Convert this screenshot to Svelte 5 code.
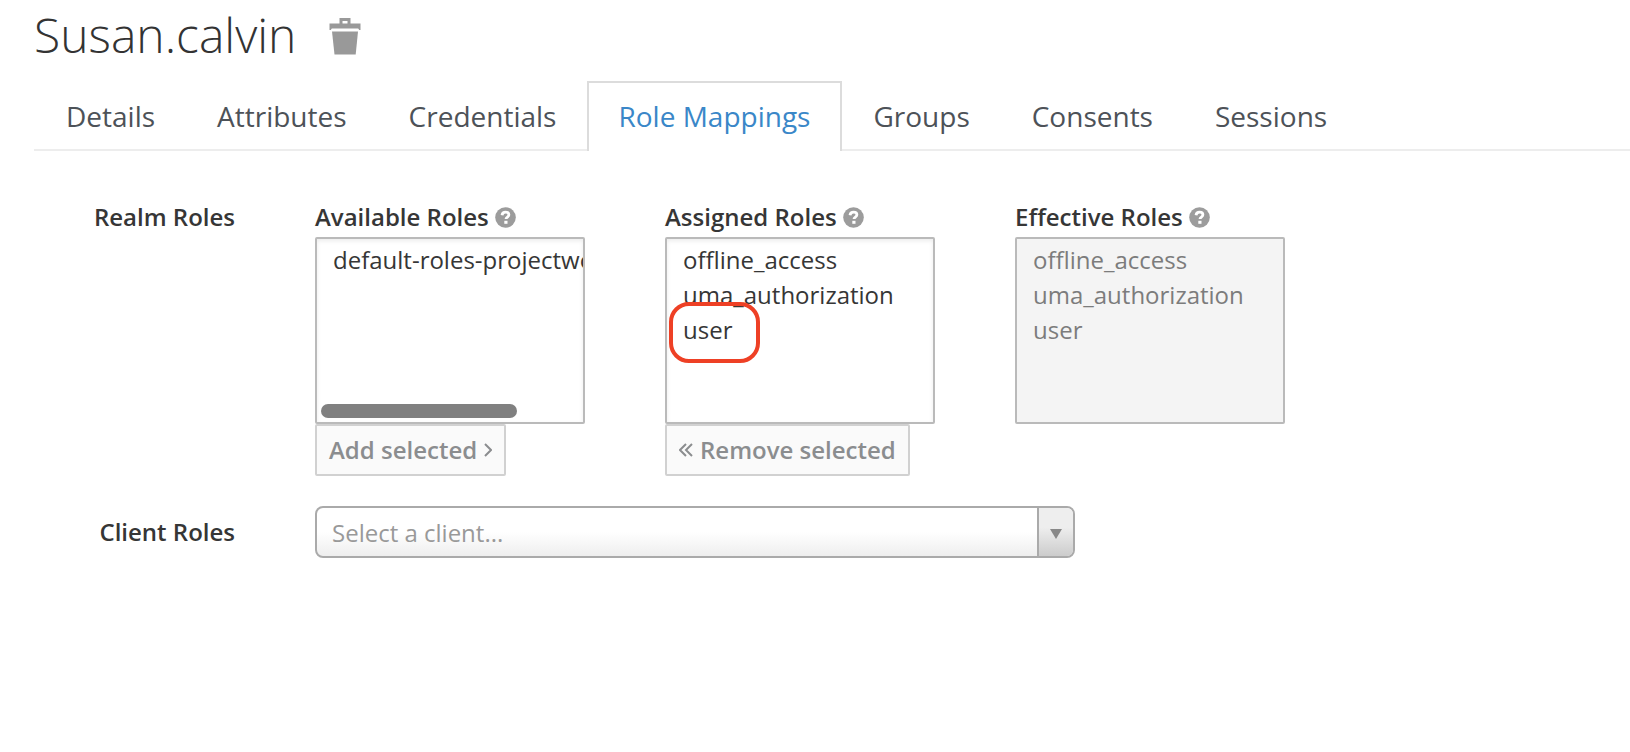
<script>
  const tabs = ['Details', 'Attributes', 'Credentials', 'Role Mappings', 'Groups', 'Consents', 'Sessions'];
  const active = 'Role Mappings';
  const available = ['default-roles-projectworlds'];
  const assigned = ['offline_access', 'uma_authorization', 'user'];
</script>

{#snippet help()}
  <svg class="help" viewBox="0 0 21 21" aria-hidden="true">
    <circle cx="10.500" cy="10.500" r="10.300" fill="#9c9c9c" />
    <path d="M7 8.200C7.300 6.200 8.600 5.200 10.600 5.200c2 0 3.300 1 3.300 2.600 0 2.300-2.900 2.200-2.900 4.200" fill="none" stroke="#fff" stroke-width="2.800" />
    <path d="M9.300 13.800h3.200v3H9.300z" fill="#fff" />
  </svg>
{/snippet}

<main>
  <header>
    <h1>Susan.calvin</h1>
    <button class="trash" aria-label="Delete user">
      <svg viewBox="0 0 32 38" aria-hidden="true">
        <path fill="#999" fill-rule="evenodd" d="M10.500 0h11v5.500h10v6.500h-1.300l-1-1.500H2.800l-1 1.500H.5V5.500h10zM13.500 3v2.500h5V3z" />
        <path fill="#999" d="M3 13.500h26l-2.300 23H5.500z" />
      </svg>
    </button>
  </header>

  <nav>
    {#each tabs as tab}
      <a href="#{tab}" class:active={tab === active}>{tab}</a>
    {/each}
  </nav>

  <form>
    <div class="row">
      <span class="name">Realm Roles</span>
      <div class="columns">
        <div class="col">
          <label for="available">Available Roles {@render help()}</label>
          <div class="box">
            <select id="available" multiple>
              {#each available as role}<option>{role}</option>{/each}
            </select>
            <span class="thumb"></span>
          </div>
          <button type="button" disabled>
            Add selected
            <svg class="single" viewBox="0 0 8 14" aria-hidden="true"><path d="M1 1l6 6-6 6" /></svg>
          </button>
        </div>
        <div class="col">
          <label for="assigned">Assigned Roles {@render help()}</label>
          <div class="box">
            <select id="assigned" multiple>
              {#each assigned as role}<option>{role}</option>{/each}
            </select>
            <span class="ring"></span>
          </div>
          <button type="button" disabled>
            <svg class="double" viewBox="0 0 14 14" aria-hidden="true"><path d="M7 1L1 7l6 6M13 1L7 7l6 6" /></svg>
            Remove selected
          </button>
        </div>
        <div class="col">
          <label for="effective">Effective Roles {@render help()}</label>
          <div class="box">
            <select id="effective" multiple disabled>
              {#each assigned as role}<option>{role}</option>{/each}
            </select>
          </div>
        </div>
      </div>
    </div>

    <div class="row client-row">
      <label class="name" for="client">Client Roles</label>
      <div class="client">
        <select id="client"><option>Select a client...</option></select>
        <span class="arrow"><svg viewBox="0 0 12 10" aria-hidden="true"><path d="M0 0h12L6 10z" fill="#888" /></svg></span>
      </div>
    </div>
  </form>
</main>

<style>
  :global(body) {
    margin: 0;
    background: #fff;
  }
  main {
    padding-left: 34px;
    font: 24px/36px 'Open Sans', sans-serif;
    color: #363636;
  }
  header {
    display: flex;
    align-items: center;
    gap: 33px;
    height: 70px;
  }
  h1 {
    margin: 0;
    font-size: 48px;
    line-height: 70px;
    font-weight: 300;
    color: #333;
  }
  button {
    font: inherit;
  }
  .trash {
    padding: 4px 0 0;
    border: 0;
    background: none;
    display: flex;
  }
  .trash svg {
    width: 32px;
    height: 38px;
  }
  nav {
    display: flex;
    margin-top: 11px;
    padding-left: 1px;
    border-bottom: 2px solid #ededed;
  }
  nav a {
    padding: 13px 29px 15px;
    margin-bottom: -2px;
    border: 2px solid transparent;
    border-bottom: 0;
    font-size: 28px;
    line-height: 40px;
    color: #4d5258;
    text-decoration: none;
    white-space: nowrap;
  }
  nav a.active {
    padding-right: 30px;
    color: #3a87c8;
    background: #fff;
    border-color: #dcdcdc;
  }
  form {
    padding-top: 48px;
  }
  .row {
    display: grid;
    grid-template-columns: 201px minmax(0, 1fr);
    column-gap: 80px;
  }
  .client-row {
    margin-top: 30px;
    align-items: center;
  }
  .name {
    text-align: right;
    font-weight: 600;
  }
  .columns {
    display: grid;
    grid-template-columns: repeat(3, minmax(0, 270px));
    column-gap: 80px;
  }
  .col {
    display: flex;
    flex-direction: column;
    align-items: flex-start;
  }
  .col label {
    display: flex;
    align-items: center;
    gap: 6px;
    font-weight: 600;
    white-space: nowrap;
  }
  .help {
    width: 21px;
    height: 21px;
  }
  .box {
    position: relative;
    width: 100%;
    margin-top: 2px;
  }
  .box select {
    display: block;
    box-sizing: border-box;
    width: 100%;
    height: 187px;
    margin: 0;
    padding: 4px 12px;
    border: 2px solid #bababa;
    border-radius: 2px;
    background: #fff;
    box-shadow: inset 0 2px 4px rgba(0, 0, 0, 0.08);
    font: inherit;
    color: #363636;
    overflow: hidden;
    outline: 0;
  }
  .box select:disabled {
    background: #f4f4f4;
    box-shadow: none;
    opacity: 1;
  }
  .box option {
    padding: 0 4px;
    min-height: 35px;
    line-height: 35px;
    white-space: nowrap;
  }
  .box select:disabled option {
    color: #7c7c7c;
  }
  .thumb {
    position: absolute;
    left: 6px;
    bottom: 6px;
    width: 196px;
    height: 14px;
    border-radius: 7px;
    background: #808080;
  }
  .ring {
    position: absolute;
    left: 4px;
    top: 65px;
    box-sizing: border-box;
    width: 91px;
    height: 61px;
    border: 4px solid #ee4025;
    border-radius: 20px;
    pointer-events: none;
  }
  .col button {
    display: flex;
    align-items: center;
    gap: 7px;
    padding: 6px 12px;
    border: 2px solid #d1d1d1;
    border-radius: 2px;
    background: #fafafa;
    color: #8b8d8f;
    font-weight: 600;
    white-space: nowrap;
  }
  .col button svg {
    height: 14px;
    fill: none;
    stroke: #8b8d8f;
    stroke-width: 2;
  }
  .single {
    width: 8px;
  }
  .double {
    width: 14px;
  }
  .client {
    position: relative;
    max-width: 760px;
  }
  .client select {
    display: block;
    appearance: none;
    box-sizing: border-box;
    width: 100%;
    height: 52px;
    margin: 0;
    padding: 2px 48px 0 15px;
    border: 2px solid #aaa;
    border-radius: 8px;
    background: linear-gradient(to top, #eee 0%, #fff 50%);
    font: inherit;
    color: #999;
    opacity: 1;
  }
  .arrow {
    position: absolute;
    top: 2px;
    right: 2px;
    bottom: 2px;
    width: 34px;
    display: flex;
    align-items: center;
    justify-content: center;
    padding-top: 3px;
    border-left: 2px solid #aaa;
    border-radius: 0 6px 6px 0;
    background: linear-gradient(to top, #ccc 0%, #eee 60%);
    pointer-events: none;
  }
  .arrow svg {
    width: 12px;
    height: 10px;
  }
</style>
